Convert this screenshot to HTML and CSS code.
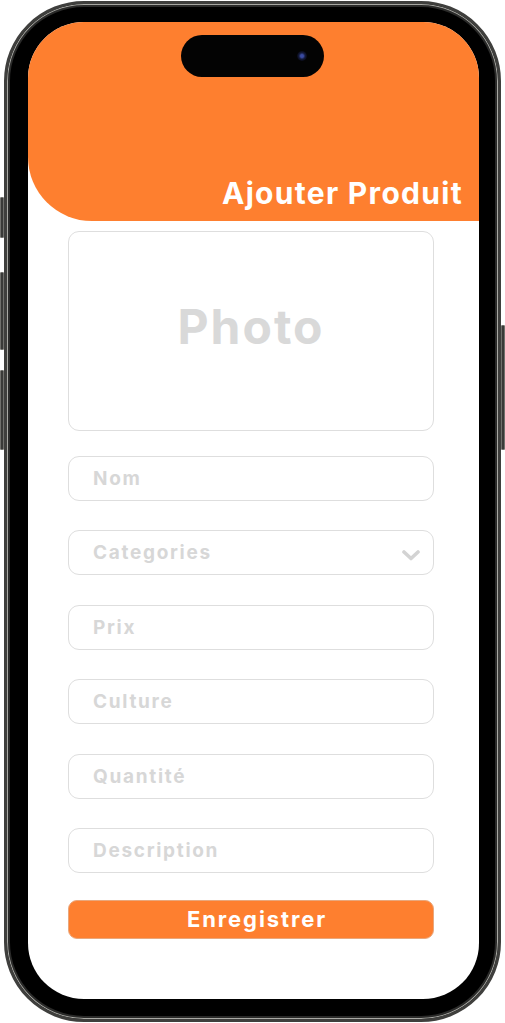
FILE: index.html
```html
<!DOCTYPE html>
<html lang="fr">
<head>
<meta charset="utf-8">
<title>Ajouter Produit</title>
<link rel="stylesheet" href="styles.css">
</head>
<body>
<div class="phone">
  <span class="side side-action"></span>
  <span class="side side-volup"></span>
  <span class="side side-voldown"></span>
  <span class="side side-power"></span>
  <div class="screen">
    <div class="island"><span class="cam"></span></div>
    <header class="header">
      <h1 class="title">Ajouter Produit</h1>
    </header>
    <form class="form">
      <div class="photo">Photo</div>
      <div class="fields">
        <input class="field" type="text" placeholder="Nom">
        <div class="field select">
          <span class="ph">Categories</span>
          <svg class="chev" width="18" height="11" viewBox="0 0 18 11"><polyline points="2,2 9,8.5 16,2" fill="none" stroke="#d3d3d3" stroke-width="3.6" stroke-linecap="round" stroke-linejoin="round"/></svg>
        </div>
        <input class="field" type="text" placeholder="Prix">
        <input class="field" type="text" placeholder="Culture">
        <input class="field" type="text" placeholder="Quantité">
        <input class="field" type="text" placeholder="Description">
      </div>
      <button class="save" type="button">Enregistrer</button>
    </form>
  </div>
</div>
</body>
</html>
```

FILE: styles.css
```css
html, body {
  margin: 0;
  padding: 0;
  background: #ffffff;
}
body {
  width: 505px;
  height: 1023px;
  overflow: hidden;
  font-family: Inter, "Liberation Sans", sans-serif;
}
.phone {
  position: relative;
  box-sizing: border-box;
  width: 497px;
  height: 1021px;
  margin: 1px 0 0 4px;
  border-radius: 80px;
  background: #000;
  border: 3px solid #3f3f3d;
  box-shadow: inset 0 0 0 1px #a9a9a4, inset 0 0 0 3px #2a2a29;
  padding: 18px 19px 20px 21px;
}
.side {
  position: absolute;
  width: 4px;
  background: #3a3a38;
  border: 1px solid #70706c;
  box-sizing: border-box;
  border-radius: 1px;
}
.side-action { left: -7px; top: 193px; height: 41px; }
.side-volup { left: -7px; top: 268px; height: 78px; }
.side-voldown { left: -7px; top: 366px; height: 80px; }
.side-power { right: -7px; top: 321px; height: 125px; }
.screen {
  position: relative;
  height: 100%;
  border-radius: 56px;
  overflow: hidden;
  background: #ffffff;
}
.island {
  position: absolute;
  left: 153px;
  top: 13px;
  width: 143px;
  height: 42px;
  border-radius: 21px;
  background: #030303;
}
.cam {
  position: absolute;
  right: 17px;
  top: 16px;
  width: 10px;
  height: 10px;
  border-radius: 50%;
  background: radial-gradient(circle, #3a4aa0 0 20%, #141a3a 45%, #070710 75%);
}
.header {
  height: 199px;
  background: #fe7f2f;
  border-bottom-left-radius: 64px;
  display: flex;
  align-items: flex-end;
  justify-content: flex-end;
  box-sizing: border-box;
  padding: 0 16px 10px 0;
}
.title {
  margin: 0;
  color: #ffffff;
  font-size: 30px;
  line-height: 36px;
  font-weight: 700;
  letter-spacing: 1.3px;
}
.form {
  display: flex;
  flex-direction: column;
  padding: 10px 45px 0 40px;
}
.photo {
  box-sizing: border-box;
  height: 200px;
  border: 1px solid #dedede;
  border-radius: 11px;
  display: flex;
  align-items: center;
  justify-content: center;
  padding-bottom: 10px;
  font-size: 48px;
  font-weight: 700;
  color: #d9d9d9;
  letter-spacing: 2px;
}
.fields {
  display: flex;
  flex-direction: column;
  gap: 29.4px;
  margin-top: 25px;
}
.field {
  box-sizing: border-box;
  width: 100%;
  height: 45px;
  margin: 0;
  border: 1px solid #dedede;
  border-radius: 11px;
  background: #fff;
  padding: 0 0 0 24px;
  font-family: inherit;
  font-size: 19px;
  font-weight: 700;
  letter-spacing: 1.7px;
  color: #999;
  outline: none;
}
.field::placeholder,
.ph {
  color: #d7d7d7;
  opacity: 1;
}
.select {
  display: flex;
  align-items: center;
  justify-content: space-between;
  padding-right: 13px;
}
.chev {
  margin-top: 6px;
}
.save {
  margin-top: 27px;
  height: 39px;
  border: 1px solid #e9a77c;
  border-radius: 9px;
  background: #fe7f2f;
  color: #ffffff;
  font-family: inherit;
  font-size: 22px;
  font-weight: 700;
  letter-spacing: 1.9px;
  padding: 0 0 0 12px;
  cursor: pointer;
}
```
